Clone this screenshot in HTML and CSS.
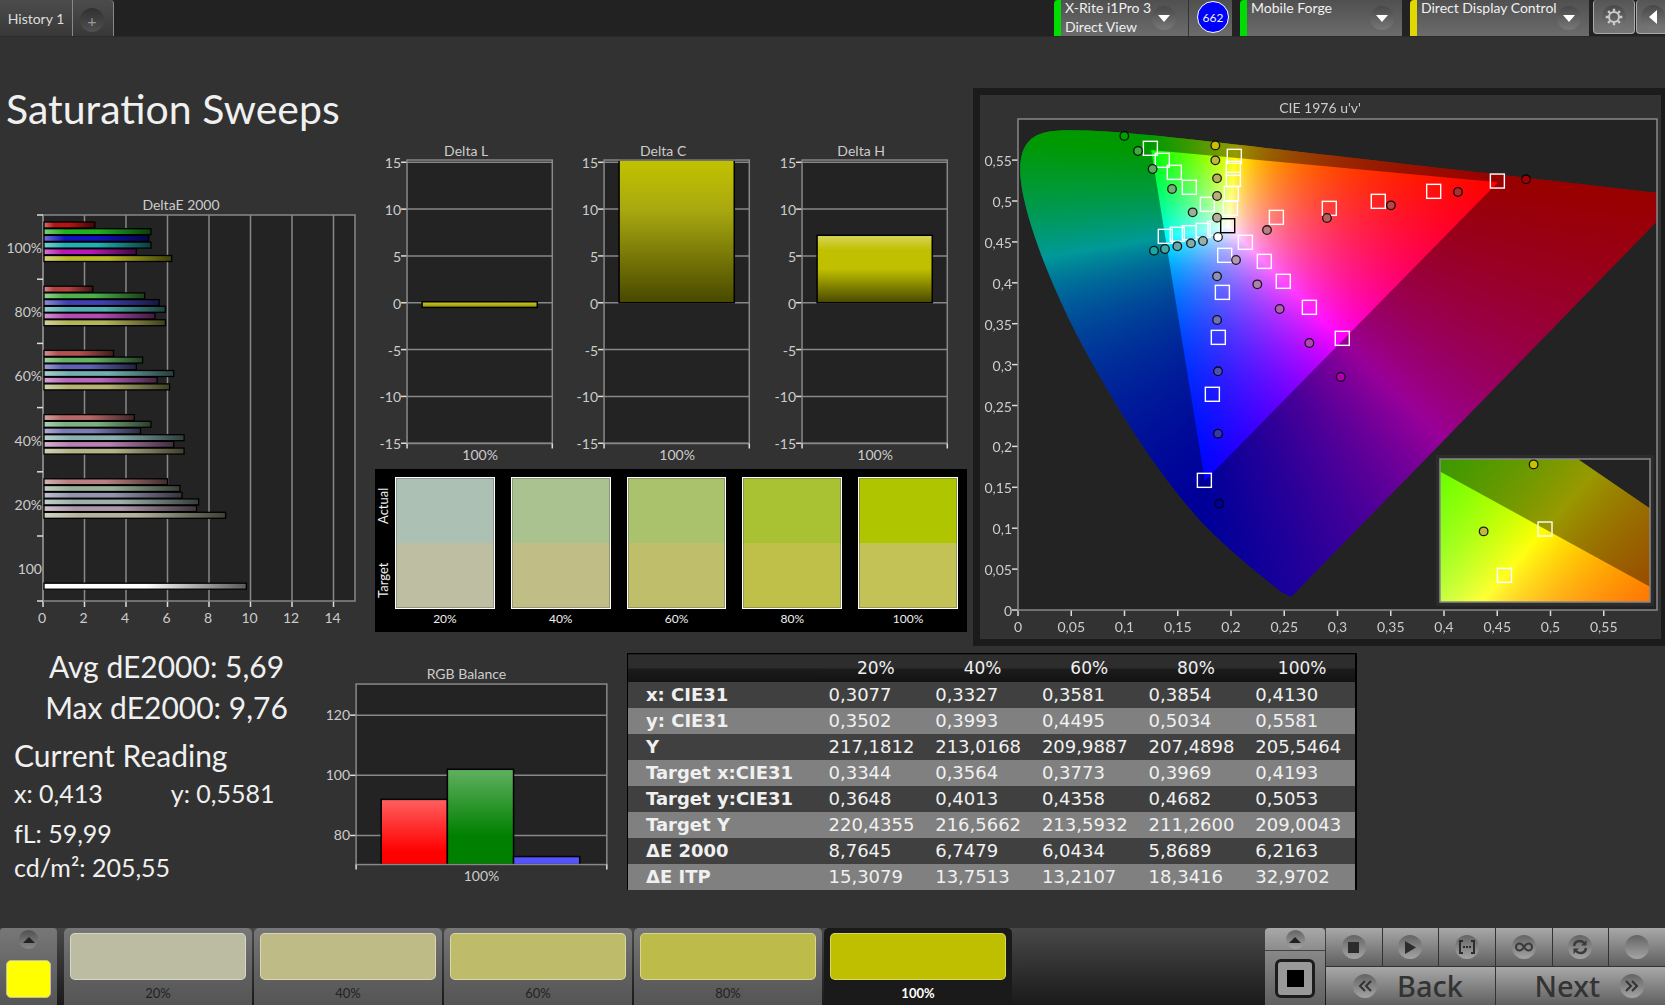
FILE: index.html
```html
<!DOCTYPE html>
<html lang="en">
  <head>
    <meta charset="UTF-8" />
    <title>Saturation Sweeps</title>
    <meta name="viewport" content="width=device-width, initial-scale=1.0">
    <link rel="stylesheet" href="styles.css">
  </head>
  <body>
    <header class="topbar">
      <nav class="tabs">
        <button class="tab">History 1</button>
        <button class="tab tab-add"><span class="round">+</span></button>
      </nav>
      <div class="devices">
        <button class="device device-meter">
          <span class="device-name">X-Rite i1Pro 3<br>Direct View</span>
          <span class="round"><svg width="12" height="7"><path d="M0 0h12l-6 7z" fill="#fff"/></svg></span>
        </button>
        <div class="badge-box"><span class="badge">662</span></div>
        <button class="device device-source">
          <span class="device-name">Mobile Forge</span>
          <span class="round"><svg width="12" height="7"><path d="M0 0h12l-6 7z" fill="#fff"/></svg></span>
        </button>
        <button class="device device-display">
          <span class="device-name">Direct Display Control</span>
          <span class="round"><svg width="12" height="7"><path d="M0 0h12l-6 7z" fill="#fff"/></svg></span>
        </button>
        <button class="tool" aria-label="Settings">
          <span class="round">
            <svg width="18" height="18" viewBox="-9 -9 18 18" fill="none" stroke="#ccc">
              <circle r="5" stroke-width="2"/>
              <g stroke-width="2.4">
                <path d="M0-8.3v2.6M0 8.3V5.700M-8.300 0h2.600M8.300 0H5.700M-5.900-5.900l1.900 1.900M5.900 5.900L4 4M-5.900 5.900L-4 4M5.900-5.900L4-4"/>
              </g>
            </svg>
          </span>
        </button>
        <button class="tool tool-edge" aria-label="Collapse">
          <span class="round"><svg width="8" height="14"><path d="M8 0v14L0 7z" fill="#fff"/></svg></span>
        </button>
      </div>
    </header>

    <main>
      <section class="row-top">
        <div class="col-left">
          <h1>Saturation Sweeps</h1>
          <svg class="chart" id="deltae" viewBox="0 0 375 436"></svg>
        </div>

        <div class="col-mid">
          <div class="deltas">
            <svg class="chart" id="delta-l" viewBox="0 0 197 327"></svg>
            <svg class="chart" id="delta-c" viewBox="0 0 197 327"></svg>
            <svg class="chart" id="delta-h" viewBox="0 0 197 327"></svg>
          </div>
          <div class="swatches">
            <div class="swatch-side"><span>Actual</span><span>Target</span></div>
            <div class="swatch"><div class="pair pair-20"></div>20%</div>
            <div class="swatch"><div class="pair pair-40"></div>40%</div>
            <div class="swatch"><div class="pair pair-60"></div>60%</div>
            <div class="swatch"><div class="pair pair-80"></div>80%</div>
            <div class="swatch"><div class="pair pair-100"></div>100%</div>
          </div>
        </div>

        <div class="cie">
          <canvas id="cie-fill" width="681" height="544"></canvas>
          <svg class="chart" id="cie" viewBox="0 0 681 544"></svg>
        </div>
      </section>

      <section class="row-bottom">
        <div class="stats">
          <p class="big center">Avg dE2000: 5,69</p>
          <p class="big center">Max dE2000: 9,76</p>
          <h2>Current Reading</h2>
          <p class="xy"><span>x: 0,413</span><span>y: 0,5581</span></p>
          <p>fL: 59,99</p>
          <p>cd/m²: 205,55</p>
        </div>
        <svg class="chart" id="rgb" viewBox="0 0 300 226"></svg>
        <table class="readings">
          <thead>
            <tr><th></th><th>20%</th><th>40%</th><th>60%</th><th>80%</th><th>100%</th></tr>
          </thead>
          <tbody>
            <tr><th>x: CIE31</th><td>0,3077</td><td>0,3327</td><td>0,3581</td><td>0,3854</td><td>0,4130</td></tr>
            <tr><th>y: CIE31</th><td>0,3502</td><td>0,3993</td><td>0,4495</td><td>0,5034</td><td>0,5581</td></tr>
            <tr><th>Y</th><td>217,1812</td><td>213,0168</td><td>209,9887</td><td>207,4898</td><td>205,5464</td></tr>
            <tr><th>Target x:CIE31</th><td>0,3344</td><td>0,3564</td><td>0,3773</td><td>0,3969</td><td>0,4193</td></tr>
            <tr><th>Target y:CIE31</th><td>0,3648</td><td>0,4013</td><td>0,4358</td><td>0,4682</td><td>0,5053</td></tr>
            <tr><th>Target Y</th><td>220,4355</td><td>216,5662</td><td>213,5932</td><td>211,2600</td><td>209,0043</td></tr>
            <tr><th>ΔE 2000</th><td>8,7645</td><td>6,7479</td><td>6,0434</td><td>5,8689</td><td>6,2163</td></tr>
            <tr><th>ΔE ITP</th><td>15,3079</td><td>13,7513</td><td>13,2107</td><td>18,3416</td><td>32,9702</td></tr>
          </tbody>
        </table>
      </section>
    </main>

    <footer class="bottombar">
      <button class="current" aria-label="Current patch">
        <span class="round small"><svg width="12" height="6"><path d="M0 6h12L6 0z" fill="#222"/></svg></span>
        <span class="current-color"></span>
      </button>
      <div class="patches">
        <button class="patch"><span class="patch-color c20"></span>20%</button>
        <button class="patch"><span class="patch-color c40"></span>40%</button>
        <button class="patch"><span class="patch-color c60"></span>60%</button>
        <button class="patch"><span class="patch-color c80"></span>80%</button>
        <button class="patch active"><span class="patch-color c100"></span>100%</button>
      </div>
      <div class="window-box">
        <button class="window-up" aria-label="More">
          <span class="round small"><svg width="12" height="6"><path d="M0 6h12L6 0z" fill="#222"/></svg></span>
        </button>
        <button class="window-stop" aria-label="Pattern window"><span></span></button>
      </div>
      <div class="transport">
        <button aria-label="Stop"><span class="round"><svg width="11" height="11"><path d="M0 0h11v11H0z" fill="#2c2c2c"/></svg></span></button>
        <button aria-label="Play"><span class="round"><svg width="11" height="13"><path d="M0 0l11 6.500L0 13z" fill="#2c2c2c"/></svg></span></button>
        <button aria-label="Read series"><span class="round"><svg width="16" height="14" fill="none" stroke="#2c2c2c" stroke-width="2"><path d="M4 1H1v12h3M12 1h3v12h-3M4 7h2M7 7h2M10 7h2"/></svg></span></button>
        <button aria-label="Continuous"><span class="round"><svg width="18" height="10" fill="none" stroke="#3a3a3a" stroke-width="2"><path d="M9 5C7.500 2.500 6.500 1.500 4.500 1.500a3.500 3.500 0 0 0 0 7C6.500 8.500 7.500 7.500 9 5s2.500-3.500 4.500-3.500a3.500 3.500 0 0 1 0 7C11.500 8.500 10.500 7.500 9 5z"/></svg></span></button>
        <button aria-label="Refresh"><span class="round"><svg width="16" height="16" fill="none" stroke="#3a3a3a" stroke-width="2.500"><path d="M2 7c.5-3.500 3-5 5.500-5 2 0 3.500.8 4.500 2M14 9c-.5 3.500-3 5-5.500 5-2 0-3.500-.8-4.500-2"/><path d="M14.500 1v5.500H9zM1.500 15V9.500H7z" fill="#3a3a3a" stroke="none"/></svg></span></button>
        <button aria-label="Record"><span class="round"></span></button>
        <button class="wide back">
          <span class="round"><svg width="14" height="12" fill="none" stroke="#333" stroke-width="2"><path d="M7 1L2 6l5 5M13 1L8 6l5 5"/></svg></span>
          <span class="wide-text">Back</span>
        </button>
        <button class="wide next">
          <span class="wide-text">Next</span>
          <span class="round"><svg width="14" height="12" fill="none" stroke="#333" stroke-width="2"><path d="M1 1l5 5-5 5M7 1l5 5-5 5"/></svg></span>
        </button>
      </div>
    </footer>

    <script src="charts.js"></script>
  </body>
</html>
```

FILE: styles.css
```css
* {
  box-sizing: border-box;
}
body {
  margin: 0;
  min-height: 100vh;
  display: flex;
  flex-direction: column;
  background-color: #323232;
  color: #f0f0f0;
  font-family: Lato, "Liberation Sans", sans-serif;
  font-size: 14px;
  overflow-x: hidden;
}
button {
  margin: 0;
  padding: 0;
  border: none;
  color: inherit;
  font-family: inherit;
  font-size: inherit;
  cursor: pointer;
}
h1, h2, p {
  margin: 0;
  font-weight: normal;
}
.round {
  display: flex;
  align-items: center;
  justify-content: center;
  flex: none;
  width: 24px;
  height: 24px;
  border-radius: 50%;
  background: linear-gradient(#484848, #787878);
}
.round.small {
  width: 19px;
  height: 19px;
}

/* top bar */
.topbar {
  display: flex;
  justify-content: space-between;
  height: 37px;
  background-color: #222;
  border-bottom: 1px solid #2a2a2a;
}
.tabs, .devices {
  display: flex;
}
.tab {
  padding: 0 6px;
  width: 73px;
  white-space: nowrap;
  background: linear-gradient(#4c4c4c, #383838);
  border-right: 1px solid #888;
  color: #ddd;
}
.tab-add {
  width: 41px;
  padding: 4px 8px 0 7px;
  border-top-right-radius: 4px;
}
.tab-add .round {
  background: linear-gradient(#303030, #505050);
  color: #999;
  font-size: 16px;
}
.device {
  display: flex;
  justify-content: space-between;
  height: 36px;
  margin-left: 8px;
  padding: 0 12px 0 4px;
  text-align: left;
  line-height: 19px;
  background: linear-gradient(#505050, #6c6c6c);
  border-left: 7px solid #0d0;
  border-top-left-radius: 4px;
}
.device .round {
  margin-top: 6px;
}
.device-meter {
  width: 134px;
}
.device-source {
  width: 162px;
  padding-right: 8px;
}
.device-display {
  width: 179px;
  padding-right: 8px;
  border-left-color: #e0d800;
}
.device-name {
  margin-top: -2px;
  white-space: nowrap;
}
.badge-box {
  width: 44px;
  padding: 1px 0 0 8px;
  background: linear-gradient(#505050, #6c6c6c);
  border-left: 1px solid #333;
}
.badge {
  display: flex;
  align-items: center;
  justify-content: center;
  width: 32px;
  height: 32px;
  border: 1px solid #fff;
  border-radius: 50%;
  background-color: #00f;
  font-size: 12px;
}
.tool {
  width: 42px;
  height: 34px;
  margin-left: 4px;
  padding-left: 8px;
  background: linear-gradient(#555, #777);
  border: 1px solid #aaa;
  border-top: none;
  border-radius: 4px;
}
.tool-edge {
  width: 29px;
  margin-left: 1px;
  padding-left: 4px;
  border-right: none;
  border-radius: 4px 0 0 4px;
}

/* charts */
main {
  flex: 1;
}
.chart {
  display: block;
  width: 100%;
  height: auto;
  font-size: 14px;
  fill: #ccc;
}
.row-top {
  display: grid;
  grid-template-columns: 375fr 598fr 692fr;
  align-items: end;
  padding-top: 49px;
}
.col-left {
  padding-bottom: 14px;
}
h1 {
  margin-bottom: 64px;
  padding-left: 6px;
  font-size: 41px;
  line-height: 46px;
}
.col-mid {
  padding: 0 6px 14px 0;
}
.deltas {
  display: grid;
  grid-template-columns: repeat(3, 1fr);
}
.cie {
  position: relative;
  border: 7px solid #1b1b1b;
  border-right-width: 4px;
}
.cie canvas {
  position: absolute;
  top: 0;
  left: 0;
  width: 100%;
  height: 100%;
}
.cie svg {
  position: relative;
}

/* actual / target swatches */
.swatches {
  display: flex;
  gap: 16px;
  height: 163px;
  padding: 8px 9px 0 0;
  background-color: #000;
  font-size: 12px;
  text-align: center;
}
.swatch-side {
  display: flex;
  flex-direction: row-reverse;
  justify-content: space-between;
  width: 17px;
  height: 132px;
  margin-right: -13px;
  padding: 11px 0;
  writing-mode: vertical-rl;
  transform: rotate(180deg);
  line-height: 17px;
  font-size: 13px;
}
.swatch {
  flex: 1;
  line-height: 20px;
}
.pair {
  height: 132px;
  border: 1px solid #fff;
  box-shadow: inset 0 0 0 1px rgba(90, 90, 90, 0.4);
}
.pair-20 {
  background: linear-gradient(#acc1b4 50%, #bebea2 50%);
}
.pair-40 {
  background: linear-gradient(#aac290 50%, #c0be86 50%);
}
.pair-60 {
  background: linear-gradient(#a9c26b 50%, #bebe6b 50%);
}
.pair-80 {
  background: linear-gradient(#a9c233 50%, #bec04a 50%);
}
.pair-100 {
  background: linear-gradient(#afc500 50%, #c2c256 50%);
}

/* bottom row */
.row-bottom {
  display: grid;
  grid-template-columns: 320fr 307fr 730fr 308fr;
  align-items: start;
}
.stats {
  padding-left: 14px;
  font-size: 25px;
  line-height: 34px;
}
.stats .big, .stats h2 {
  font-size: 30px;
  line-height: 41px;
}
.stats .center {
  padding-right: 1px;
  text-align: center;
}
.stats h2 {
  margin-top: 7px;
}
.stats .xy {
  display: flex;
  gap: 68px;
  margin-bottom: 6px;
}
#rgb {
  width: 98%;
  margin-top: 18px;
}
.readings {
  width: 100%;
  margin-top: 7px;
  border: 1px solid #000;
  border-right-width: 2px;
  border-bottom: none;
  border-collapse: collapse;
  table-layout: fixed;
  font-family: "DejaVu Sans", sans-serif;
  font-size: 18px;
  line-height: 26px;
}
.readings th, .readings td {
  height: 26px;
  padding: 0 0 0 6px;
  text-align: left;
  font-weight: normal;
}
.readings thead th {
  height: 28px;
  padding: 0;
  font-size: 17px;
  line-height: 28px;
  text-align: center;
  background: linear-gradient(#2d2d2d 50%, #1c1c1c 50%, #121212);
}
.readings th:first-child {
  width: 195px;
  padding-left: 18px;
  font-size: 18px;
  font-weight: bold;
  white-space: nowrap;
}
.readings tbody tr {
  background-color: #404040;
}
.readings tbody tr:nth-child(even) {
  background-color: #808080;
}

/* bottom bar */
.bottombar {
  display: flex;
  height: 77px;
  background: linear-gradient(#484848, #1a1a1a);
  font-size: 13px;
}
.current {
  display: flex;
  flex-direction: column;
  align-items: center;
  justify-content: space-between;
  width: 57px;
  padding: 2px 0 7px;
  background: linear-gradient(#777, #555);
  border-radius: 4px 4px 0 0;
}
.current .round {
  background: linear-gradient(#505050, #888);
}
.current-color {
  width: 45px;
  height: 38px;
  border: 1px solid #bbb;
  border-radius: 5px;
  background-color: #ff0;
}
.patches {
  display: flex;
  gap: 2px;
  margin-left: 7px;
  flex: 0 1 948px;
}
.patch {
  flex: 1;
  padding: 5px 6px 0;
  background: linear-gradient(#777, #606060 60%, #555);
  border-radius: 5px 5px 0 0;
  color: #222;
  line-height: 26px;
}
.patch-color {
  display: block;
  height: 47px;
  border: 1px solid rgba(255, 255, 255, 0.4);
  border-radius: 5px;
}
.patch.active {
  background: #1a1a1a;
  color: #fff;
  font-weight: bold;
}
.c20 {
  background-color: #bcbca2;
}
.c40 {
  background-color: #bfbb86;
}
.c60 {
  background-color: #bebc6b;
}
.c80 {
  background-color: #bdbc4a;
}
.c100 {
  background-color: #bfbf00;
}
.window-box {
  display: flex;
  flex-direction: column;
  width: 60px;
  margin-left: auto;
}
.window-up {
  display: flex;
  justify-content: center;
  height: 23px;
  padding-top: 2px;
  background: linear-gradient(#a8a8a8, #8c8c8c);
  border-radius: 4px 4px 0 0;
  border-bottom: 1px solid #444;
}
.window-stop {
  flex: 1;
  padding: 0 10px;
  background: linear-gradient(#888, #606060);
}
.window-stop span {
  display: block;
  width: 40px;
  height: 39px;
  border: 3px solid #1c1c1c;
  border-radius: 6px;
  background: linear-gradient(#000, #000) center / 17px 17px no-repeat, #999;
}
.transport {
  display: grid;
  grid-template-columns: repeat(6, 1fr);
  grid-template-rows: 38px 38px;
  gap: 1px;
  width: 339px;
  margin-left: 1px;
  background-color: #333;
}
.transport button {
  display: flex;
  align-items: center;
  justify-content: center;
  color: #333;
  background: linear-gradient(#a8a8a8, #606060);
}
.transport .round, .window-up .round {
  background: linear-gradient(#646464, #a4a4a4);
}
.transport .wide {
  grid-column: span 3;
  gap: 20px;
}
.transport .back {
  justify-content: flex-start;
  padding-left: 27px;
}
.transport .next {
  justify-content: flex-end;
  padding-right: 21px;
}
.wide-text {
  font-family: "Noto Sans", "Open Sans", sans-serif;
  font-size: 29px;
  line-height: 36px;
  font-weight: 500;
}
```

FILE: charts.js
```js
// small svg helper
const NS = 'http://www.w3.org/2000/svg';
function add(parent, tag, attrs, text) {
  const el = document.createElementNS(NS, tag);
  for (const k in attrs) el.setAttribute(k, attrs[k]);
  if (text !== undefined) el.textContent = text;
  parent.appendChild(el);
  return el;
}
function line(svg, x1, y1, x2, y2, color = '#888') {
  add(svg, 'line', { x1, y1, x2, y2, stroke: color, 'stroke-width': 1.5 });
}
function label(svg, x, y, text, anchor = 'middle') {
  add(svg, 'text', { x, y, 'text-anchor': anchor }, text);
}
function gradient(svg, id, vertical, stops) {
  const g = add(svg, 'linearGradient', { id, x1: 0, y1: 0, x2: vertical ? 0 : 1, y2: vertical ? 1 : 0 });
  stops.forEach(([offset, color]) => add(g, 'stop', { offset, 'stop-color': color }));
}
function frame(svg, x, y, width, height) {
  add(svg, 'rect', { x, y, width, height, fill: 'none', stroke: '#888', 'stroke-width': 1.5 });
}

// DeltaE 2000
function drawDeltaE() {
  const svg = document.getElementById('deltae');
  const left = 43, top = 19, right = 355, bottom = 405, unit = 20.75, group = 64.2;
  gradient(svg, 'shade', false, [
    [0, 'rgba(255,255,255,0.4)'], [0.2, 'rgba(255,255,255,0)'],
    [0.5, 'rgba(0,0,0,0)'], [1, 'rgba(0,0,0,0.65)']
  ]);
  label(svg, 181, 14, 'DeltaE 2000');
  add(svg, 'rect', { x: left, y: top, width: right - left, height: bottom - top, fill: '#232323' });
  for (let v = 0; v <= 14; v += 2) {
    const x = left + v * unit;
    line(svg, x, top, x, bottom);
    line(svg, x, bottom, x, bottom + 6, '#ddd');
    label(svg, x - 1, bottom + 22, v);
  }
  frame(svg, left, top, right - left, bottom - top);
  const groups = [
    ['100%', [2.5, 5.2, 5.1, 5.2, 4.5, 6.2], ['#b41414', '#20b020', '#1010c0', '#20b0b0', '#b818b8', '#b8b820']],
    ['80%', [2.4, 4.9, 5.6, 5.9, 5.4, 5.9], ['#b44040', '#4cb04c', '#4040b4', '#50b0b0', '#b44cb4', '#b4b458']],
    ['60%', [3.4, 4.8, 4.5, 6.3, 5.5, 6.1], ['#b45050', '#64b064', '#6060b4', '#70b0b0', '#b868b8', '#b4b470']],
    ['40%', [4.4, 5.2, 4.7, 6.8, 6.3, 6.8], ['#b86868', '#7cb07c', '#7c7cb4', '#88b0b0', '#b880b4', '#b4b488']],
    ['20%', [6.0, 6.6, 6.7, 7.5, 7.4, 8.8], ['#b88080', '#98b098', '#9494b0', '#9cb0ac', '#b098ac', '#b4b49c']],
    ['100', [0, 0, 0, 0, 0, 0, 9.8], ['', '', '', '', '', '', '#fff']]
  ];
  groups.forEach(([name, values, colors], i) => {
    const y = top + i * group;
    line(svg, left - 6, y, left, y, '#ddd');
    label(svg, left - 1, y + 38, name, 'end');
    values.forEach((v, j) => {
      if (!v) return;
      const box = { x: left + 1, y: y + 7 + j * 6.7, width: v * unit - 1, height: 6 };
      add(svg, 'rect', { ...box, fill: colors[j] });
      add(svg, 'rect', { ...box, fill: 'url(#shade)', stroke: '#000', 'stroke-width': 1.3 });
    });
  });
  line(svg, left - 6, bottom, left, bottom, '#ddd');
}

// Delta L / C / H
function drawDelta(id, title, value, stops) {
  const svg = document.getElementById(id);
  const left = 32, top = 19, width = 145, bottom = 302, unit = 9.35, zero = 161.5;
  gradient(svg, id + '-fill', true, stops);
  label(svg, 91, 15, title);
  add(svg, 'rect', { x: left, y: top, width, height: bottom - top, fill: '#232323' });
  for (let v = -15; v <= 15; v += 5) {
    const y = zero - v * unit;
    line(svg, left, y, left + width, y);
    line(svg, left - 6, y, left, y, '#ddd');
    label(svg, left - 6, y + 6, v, 'end');
  }
  const y1 = zero - Math.max(value, 0) * unit;
  const y2 = zero - Math.min(value, 0) * unit;
  const y = Math.max(y1 - 1, top);
  add(svg, 'rect', {
    x: left + 15, y, width: 115, height: y2 - y,
    fill: `url(#${id}-fill)`, stroke: '#000', 'stroke-width': 1.5
  });
  frame(svg, left, top, width, bottom - top);
  line(svg, left, bottom, left, bottom + 5, '#ddd');
  line(svg, left + width, bottom, left + width, bottom + 5, '#ddd');
  label(svg, 105, bottom + 16, '100%');
}

// RGB balance
function drawRgb() {
  const svg = document.getElementById('rgb');
  const left = 36, top = 20, width = 250, bottom = 200;
  gradient(svg, 'red', true, [[0, '#ff6060'], [0.8, '#ff0000']]);
  gradient(svg, 'green', true, [[0, '#60b060'], [0.7, '#008000']]);
  label(svg, 146, 15, 'RGB Balance');
  add(svg, 'rect', { x: left, y: top, width, height: bottom - top, fill: '#232323' });
  [120, 100, 80].forEach((v, i) => {
    const y = 51 + i * 60;
    line(svg, left, y, left + width, y);
    line(svg, left - 6, y, left, y, '#ddd');
    label(svg, left - 6, y + 5, v, 'end');
  });
  [[61, 135, 'url(#red)'], [127, 105, 'url(#green)'], [193, 192, '#5454ff']].forEach(([x, y, fill]) => {
    add(svg, 'rect', { x, y, width: 66, height: bottom - y, fill, stroke: '#000', 'stroke-width': 1.5 });
  });
  frame(svg, left, top, width, bottom - top);
  line(svg, left, bottom, left, bottom + 5, '#ddd');
  line(svg, left + width, bottom, left + width, bottom + 5, '#ddd');
  label(svg, 161, bottom + 16, '100%');
}

// CIE diagram
const PLOT = { left: 38, top: 24, right: 677, bottom: 515, kx: 1065, ky: 818 };
const INSET = { left: 460, top: 364, right: 670, bottom: 507 };
const LOCUS = [
  [.1741, .0050], [.1714, .0051], [.1644, .0109], [.1566, .0177], [.1440, .0297], [.1355, .0399],
  [.1241, .0578], [.1096, .0868], [.0913, .1327], [.0687, .2007], [.0454, .2950], [.0235, .4127],
  [.0082, .5384], [.0039, .6548], [.0139, .7502], [.0389, .8120], [.0743, .8338], [.1142, .8262],
  [.1547, .8059], [.2296, .7543], [.3016, .6923], [.3731, .6245], [.4441, .5547], [.5125, .4866],
  [.5752, .4242], [.6270, .3725], [.6658, .3340], [.6915, .3083], [.7190, .2809], [.7347, .2653]
];
const GAMUT = [[.64, .33], [.30, .60], [.15, .06]];

function uvPoint([x, y]) {
  const d = -2 * x + 12 * y + 3;
  return [PLOT.left + 4 * x / d * PLOT.kx, PLOT.bottom - 9 * y / d * PLOT.ky];
}
function insetPoint([x, y]) {
  return [565 + (x - .4193) * 1810, 434 - (y - .5053) * 1250];
}
// brightest linear rgb for a chromaticity
function colorOf(x, y) {
  const X = x / y, Z = (1 - x - y) / y;
  const lin = [
    3.2406 * X - 1.5372 - 0.4986 * Z,
    -0.9689 * X + 1.8758 + 0.0415 * Z,
    0.0557 * X - 0.2040 + 1.0570 * Z
  ].map(c => Math.max(c, 0));
  const max = Math.max(...lin);
  return lin.map(c => 255 * c / max);
}
function tracePath(ctx, points, smooth) {
  ctx.beginPath();
  points.forEach((p, i) => {
    if (smooth && i > 0 && i < points.length - 1) {
      const n = points[i + 1];
      ctx.quadraticCurveTo(p[0], p[1], (p[0] + n[0]) / 2, (p[1] + n[1]) / 2);
    } else {
      ctx.lineTo(p[0], p[1]);
    }
  });
  ctx.closePath();
}
function fillRegion(ctx, box, toXy, project) {
  const w = box.right - box.left, h = box.bottom - box.top;
  const tmp = document.createElement('canvas');
  tmp.width = w;
  tmp.height = h;
  const tctx = tmp.getContext('2d');
  const img = tctx.createImageData(w, h);
  for (let j = 0; j < h; j++) {
    for (let i = 0; i < w; i++) {
      const [x, y] = toXy(box.left + i + .5, box.top + j + .5);
      const c = colorOf(x, Math.max(y, .001));
      img.data.set([c[0], c[1], c[2], 255], (j * w + i) * 4);
    }
  }
  tctx.putImageData(img, 0, 0);

  ctx.save();
  ctx.beginPath();
  ctx.rect(box.left, box.top, w, h);
  ctx.clip();
  ctx.fillStyle = '#232323';
  ctx.fillRect(box.left, box.top, w, h);
  tracePath(ctx, LOCUS.map(project), true);
  ctx.clip();
  ctx.drawImage(tmp, box.left, box.top);
  ctx.fillStyle = 'rgba(0, 0, 0, 0.4)';
  ctx.fillRect(box.left, box.top, w, h);
  tracePath(ctx, GAMUT.map(project));
  ctx.clip();
  ctx.drawImage(tmp, box.left, box.top);
  ctx.restore();
}

const TARGETS = [
  [.1243, .5644], [.1355, .5497], [.1468, .5350], [.1609, .5167], [.1778, .4959],
  [.2031, .5546], [.2022, .5399], [.2022, .5265], [.2003, .5090], [.1994, .4910],
  [.1383, .4568], [.1496, .4593], [.1609, .4613], [.1740, .4641], [.1850, .4666],
  [.2426, .4800], [.2923, .4910], [.3383, .4996], [.3903, .5118], [.4501, .5244],
  [.2135, .4495], [.2313, .4262], [.2491, .4018], [.2736, .3700], [.3045, .3321],
  [.1941, .4336], [.1919, .3883], [.1881, .3333], [.1825, .2637], [.1750, .1585]
];
const READINGS = [
  [.0998, .5795, '#00a000'], [.1127, .5611, '#40a840'], [.1264, .5391, '#60a860'], [.1446, .5147, '#78ac78'], [.1640, .4861, '#98b098'],
  [.1853, .5680, '#c8c000'], [.1853, .5497, '#c0b840'], [.1869, .5277, '#b8b060'], [.1869, .5061, '#b8b078'], [.1869, .4796, '#b8b098'],
  [.1277, .4393, '#18a8a0'], [.1380, .4413, '#48a8a0'], [.1496, .4446, '#68a8a8'], [.1624, .4483, '#80acac'], [.1737, .4511, '#98b0ac'],
  [.2338, .4645, '#b88080'], [.2901, .4792, '#b86060'], [.3502, .4947, '#b04848'], [.4131, .5110, '#a83030'], [.4770, .5265, '#a00000'],
  [.2047, .4279, '#b898b0'], [.2247, .3981, '#b080ac'], [.2457, .3680, '#b060b0'], [.2736, .3264, '#b048b0'], [.3030, .2849, '#b000b0'],
  [.1869, .4079, '#9090b4'], [.1869, .3545, '#7070b4'], [.1878, .2918, '#5050b0'], [.1878, .2156, '#3838a8'], [.1891, .1300, '#000098'],
  [.1878, .4560, '#ffffff']
];

function square(svg, x, y, stroke) {
  add(svg, 'rect', { x: x - 7, y: y - 7, width: 14, height: 14, fill: 'none', stroke, 'stroke-width': 1.4 });
}
function dot(svg, x, y, fill) {
  add(svg, 'circle', { cx: x, cy: y, r: 4.3, fill, stroke: '#000', 'stroke-opacity': 0.85, 'stroke-width': 1.3 });
}

function drawCie() {
  const svg = document.getElementById('cie');
  const ctx = document.getElementById('cie-fill').getContext('2d');
  fillRegion(ctx, PLOT, (px, py) => {
    const u = (px - PLOT.left) / PLOT.kx, v = (PLOT.bottom - py) / PLOT.ky;
    const d = 6 * u - 16 * v + 12;
    return [9 * u / d, 4 * v / d];
  }, uvPoint);

  // zoomed view around the current target
  ctx.fillStyle = '#2c2c2c';
  ctx.fillRect(INSET.left - 4, INSET.top - 4, INSET.right - INSET.left + 8, INSET.bottom - INSET.top + 8);
  fillRegion(ctx, INSET, (px, py) => [.4193 + (px - 565) / 1810, .5053 - (py - 434) / 1250], insetPoint);

  label(svg, 340, 18, "CIE 1976 u'v'");
  for (let i = 0; i < 12; i++) {
    const text = String(i * 5 / 100).replace('.', ',');
    const x = PLOT.left + i * .05 * PLOT.kx, y = PLOT.bottom - i * .05 * PLOT.ky;
    line(svg, x, PLOT.bottom, x, PLOT.bottom + 6, '#ddd');
    label(svg, x, PLOT.bottom + 22, text);
    line(svg, PLOT.left - 6, y, PLOT.left, y, '#ddd');
    label(svg, PLOT.left - 6, y + 6, text, 'end');
  }
  frame(svg, PLOT.left, PLOT.top, PLOT.right - PLOT.left, PLOT.bottom - PLOT.top);
  const at = (u, v) => [PLOT.left + u * PLOT.kx, PLOT.bottom - v * PLOT.ky];
  TARGETS.forEach(([u, v]) => square(svg, ...at(u, v), '#fff'));
  square(svg, ...at(.1969, .4698), '#000');
  READINGS.forEach(([u, v, c]) => dot(svg, ...at(u, v), c));

  frame(svg, INSET.left, INSET.top, INSET.right - INSET.left, INSET.bottom - INSET.top);
  square(svg, ...insetPoint([.4193, .5053]), '#fff');
  square(svg, ...insetPoint([.3969, .4682]), '#fff');
  dot(svg, ...insetPoint([.4130, .5570]), '#c8c000');
  dot(svg, ...insetPoint([.3854, .5034]), '#c0b840');
}

drawDeltaE();
drawDelta('delta-l', 'Delta L', -0.5, [[0, '#d0d030'], [1, '#909000']]);
drawDelta('delta-c', 'Delta C', 20, [[0, '#c2c200'], [0.35, '#a8a810'], [1, '#484800']]);
drawDelta('delta-h', 'Delta H', 7.1, [[0, '#d6d65c'], [0.22, '#c0c000'], [0.5, '#c0c000'], [1, '#484800']]);
drawRgb();
drawCie();
```
